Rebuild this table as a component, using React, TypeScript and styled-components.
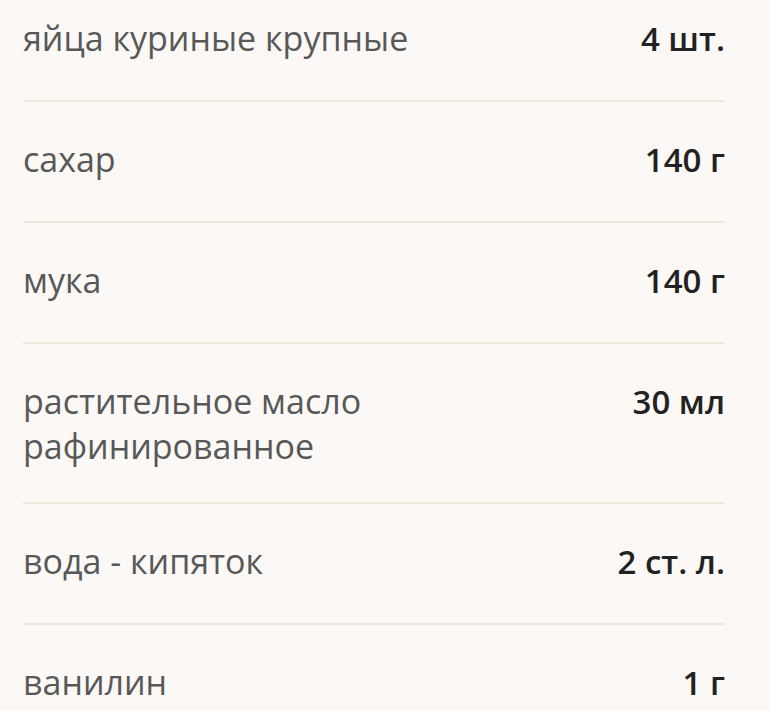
import React from 'react'
import styled, { createGlobalStyle } from 'styled-components'

const GlobalStyle = createGlobalStyle`
  html, body {
    margin: 0;
    padding: 0;
    background: #fbf8f5;
    overflow: hidden;
  }
  body {
    font-family: 'Open Sans', 'Noto Sans', sans-serif;
  }
`

type Ingredient = {
  name: string
  amount: string
}

const ingredients: Ingredient[] = [
  { name: 'яйца куриные крупные', amount: '4 шт.' },
  { name: 'сахар', amount: '140 г' },
  { name: 'мука', amount: '140 г' },
  { name: 'растительное масло рафинированное', amount: '30 мл' },
  { name: 'вода - кипяток', amount: '2 ст. л.' },
  { name: 'ванилин', amount: '1 г' },
]

const App: React.FC = () => {
  return (
    <>
      <GlobalStyle />
      <Page>
        <IngredientList>
          {ingredients.map(item => (
            <Row key={item.name}>
              <Name>{item.name}</Name>
              <Amount>{item.amount}</Amount>
            </Row>
          ))}
        </IngredientList>
      </Page>
    </>
  )
}

export default App

const Page = styled.div`
  width: 770px;
  height: 711px;
  overflow: hidden;
  background: #fbf8f5;
`

const IngredientList = styled.ul`
  list-style: none;
  margin: -19px 0 0 23px;
  padding: 0;
  width: 702px;
`

const Row = styled.li`
  display: flex;
  align-items: flex-start;
  justify-content: space-between;
  gap: 40px;
  box-sizing: border-box;
  min-height: 121px;
  padding: 35px 0 33px;
  border-bottom: 2px solid #ede7dc;
`

const Name = styled.span`
  font-size: 34px;
  line-height: 45px;
  color: #585858;
  max-width: 440px;
`

const Amount = styled.span`
  font-size: 33px;
  line-height: 45px;
  font-weight: 600;
  color: #222222;
  white-space: nowrap;
`
